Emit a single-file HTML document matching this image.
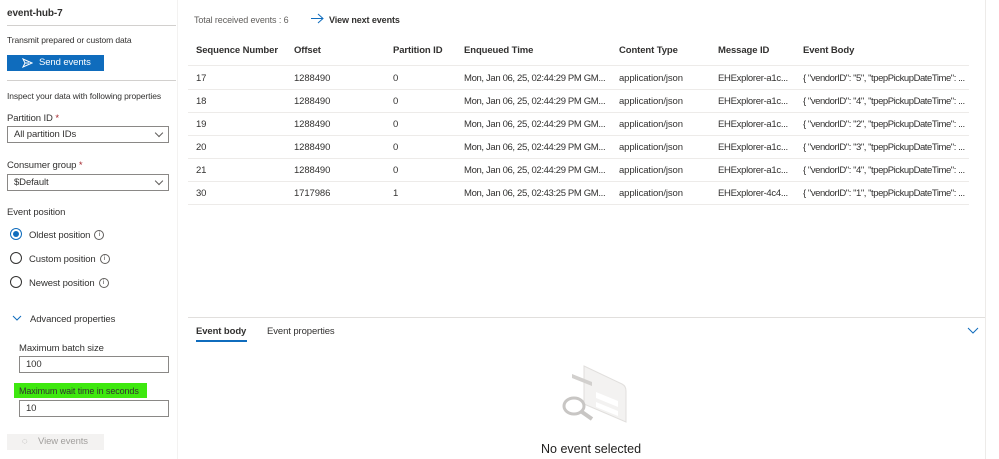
<!DOCTYPE html>
<html><head><style>
body{margin:0;width:999px;height:459px;background:#fff;font-family:"Liberation Sans",sans-serif;font-size:9.5px;letter-spacing:-0.1px;color:#323130;position:relative;overflow:hidden}
.a{position:absolute;white-space:nowrap}
.c{position:absolute;white-space:nowrap;overflow:hidden}
.hr{position:absolute;height:1px;background:#e1dfdd}
.inp{position:absolute;border:1px solid #8a8886;box-sizing:border-box;background:#fff;padding-left:6px;line-height:15px}
.chev{position:absolute;right:6px;top:3px;width:5px;height:5px;border-right:1px solid #605e5c;border-bottom:1px solid #605e5c;transform:rotate(45deg)}
.radio{position:absolute;width:12px;height:12px;border:1px solid #323130;border-radius:50%;box-sizing:border-box}
.info{display:inline-block;width:8px;height:8px;border:1px solid #605e5c;border-radius:50%;font-size:6px;line-height:8px;text-align:center;margin-left:4px;vertical-align:middle}
.th{font-weight:bold;color:#323130}
</style></head><body>
<div class="a" style="left:7px;top:8px;font-weight:bold;font-size:10px">event-hub-7</div>
<div class="hr" style="left:7px;top:25px;width:169px;background:#d2d0ce"></div>
<div class="a" style="left:7px;top:35px;font-size:8.5px">Transmit prepared or custom data</div>
<div class="a" style="left:7px;top:55px;width:97px;height:16px;background:#0f6cbd;color:#fff;line-height:16px">
<svg style="position:absolute;left:15px;top:3px" width="11" height="10" viewBox="0 0 11 10"><path d="M1 1 L10 5 L1 9 L3 5 Z M3 5 H7" fill="none" stroke="#fff" stroke-width="1"/></svg>
<span style="position:absolute;left:32px">Send events</span></div>
<div class="hr" style="left:7px;top:80px;width:169px;background:#d2d0ce"></div>
<div class="a" style="left:7px;top:91px;font-size:8.5px">Inspect your data with following properties</div>
<div class="a" style="left:7px;top:113px">Partition ID <span style="color:#a4262c">*</span></div>
<div class="inp" style="left:7px;top:126px;width:162px;height:17px">All partition IDs<span class="chev"></span></div>
<div class="a" style="left:7px;top:160px">Consumer group <span style="color:#a4262c">*</span></div>
<div class="inp" style="left:7px;top:174px;width:162px;height:17px">$Default<span class="chev"></span></div>
<div class="a" style="left:7px;top:207px">Event position</div>
<div class="radio" style="left:10px;top:228px;border-color:#0f6cbd"><div style="position:absolute;left:2px;top:2px;width:6px;height:6px;border-radius:50%;background:#0f6cbd"></div></div>
<div class="a" style="left:29px;top:230px">Oldest position<span class="info">i</span></div>
<div class="radio" style="left:10px;top:252px"></div>
<div class="a" style="left:29px;top:254px">Custom position<span class="info">i</span></div>
<div class="radio" style="left:10px;top:276px"></div>
<div class="a" style="left:29px;top:278px">Newest position<span class="info">i</span></div>
<svg class="a" style="left:12px;top:315px" width="10" height="7"><path d="M1 1 L5 5 L9 1" fill="none" stroke="#0f6cbd"/></svg>
<div class="a" style="left:30px;top:314px">Advanced properties</div>
<div class="a" style="left:19px;top:343px">Maximum batch size</div>
<div class="inp" style="left:19px;top:356px;width:150px;height:17px">100</div>
<div class="a" style="left:14px;top:383px;width:133px;height:15px;background:#3ee80f"></div>
<div class="a" style="left:19px;top:386px;font-size:9px">Maximum wait time in seconds</div>
<div class="inp" style="left:19px;top:400px;width:150px;height:17px">10</div>
<div class="a" style="left:7px;top:434px;width:97px;height:16px;background:#f3f2f1;color:#a19f9d;line-height:16px"><span style="position:absolute;left:15px;top:0">◌</span><span style="position:absolute;left:31px">View events</span></div>
<div class="a" style="left:177px;top:0;width:1px;height:459px;background:#f3f2f1"></div>

<div class="a" style="left:194px;top:15px;font-size:9px;color:#605e5c">Total received events : 6</div>
<svg class="a" style="left:311px;top:13px" width="13" height="11"><path d="M0 5.5 H12 M7 1 L12 5.5 L7 10" fill="none" stroke="#0f6cbd"/></svg>
<div class="a" style="left:329px;top:15px;font-weight:bold;font-size:9px">View next events</div>
<div class="a th" style="left:196px;top:45px">Sequence Number</div>
<div class="a th" style="left:294px;top:45px">Offset</div>
<div class="a th" style="left:393px;top:45px">Partition ID</div>
<div class="a th" style="left:464px;top:45px">Enqueued Time</div>
<div class="a th" style="left:619px;top:45px">Content Type</div>
<div class="a th" style="left:718px;top:45px">Message ID</div>
<div class="a th" style="left:803px;top:45px">Event Body</div>
<div class="hr" style="left:188px;top:65px;width:781px;background:#edebe9"></div>
<div id="rows"></div>
<script>
var d=[["17","1288490","0","a1c","5","02:44:29"],["18","1288490","0","a1c","4","02:44:29"],["19","1288490","0","a1c","2","02:44:29"],["20","1288490","0","a1c","3","02:44:29"],["21","1288490","0","a1c","4","02:44:29"],["30","1717986","1","4c4","1","02:43:25"]];
var h="";d.forEach(function(r,i){var y=67+i*23+6;
h+='<div class="a" style="left:196px;top:'+y+'px">'+r[0]+'</div><div class="a" style="left:294px;top:'+y+'px">'+r[1]+'</div><div class="a" style="left:393px;top:'+y+'px">'+r[2]+'</div><div class="a" style="left:464px;top:'+y+'px;letter-spacing:-0.35px">Mon, Jan 06, 25, '+r[5]+' PM GM...</div><div class="a" style="left:619px;top:'+y+'px">application/json</div><div class="a" style="left:718px;top:'+y+'px;letter-spacing:-0.3px">EHExplorer-'+r[3]+'...</div><div class="a" style="left:803px;top:'+y+'px;letter-spacing:-0.45px">{ "vendorID": "'+r[4]+'", "tpepPickupDateTime": ...</div><div class="hr" style="left:188px;top:'+(67+(i+1)*23-1)+'px;width:781px;background:#edebe9"></div>';});
document.getElementById("rows").innerHTML=h;
</script>
<div class="a" style="left:985px;top:0;width:1px;height:459px;background:#edebe9"></div>
<div class="hr" style="left:188px;top:317px;width:797px"></div>
<div class="a" style="left:196px;top:326px;font-weight:bold">Event body</div>
<div class="a" style="left:196px;top:340px;width:51px;height:2px;background:#0f6cbd"></div>
<div class="a" style="left:267px;top:326px">Event properties</div>
<svg class="a" style="left:967px;top:327px" width="12" height="7"><path d="M1 1 L6 6 L11 1" fill="none" stroke="#0f6cbd"/></svg>
<svg class="a" style="left:556px;top:364px" width="72" height="60">
<path d="M28 2 L66 20 Q70 22 70 27 L70 58 L28 40 Z" fill="#f3f2f1" stroke="#e1dfdd"/>
<path d="M16 10 L36 18 L36 22 L16 14 Z" fill="#d2d0ce"/>
<path d="M40 28 L62 37 L62 43 L40 34 Z" fill="#fff"/>
<path d="M40 38 L62 47 L62 52 L40 43 Z" fill="#fff"/>
<ellipse cx="18" cy="42" rx="10" ry="8" fill="#fff" stroke="#c8c6c4" stroke-width="3"/>
<path d="M26 48 L36 55" stroke="#c8c6c4" stroke-width="4"/>
</svg>
<div class="a" style="left:541px;top:442px;font-size:12.5px;letter-spacing:0;color:#201f1e">No event selected</div>
</body></html>
